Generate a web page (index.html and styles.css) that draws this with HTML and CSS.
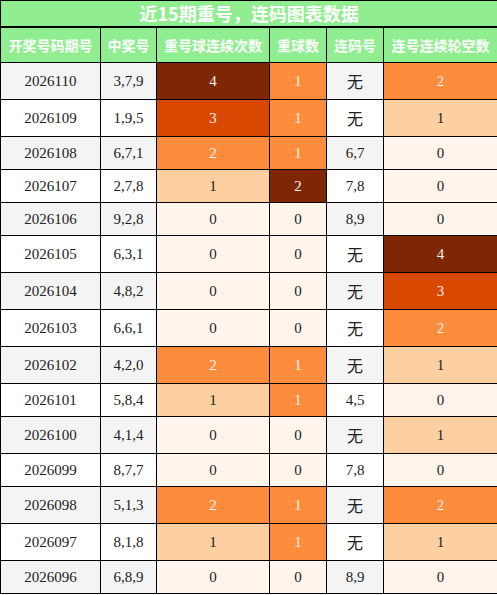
FILE: index.html
```html
<!DOCTYPE html>
<html lang="zh">
<head>
    <meta charset="UTF-8">
    <meta name="viewport" content="width=device-width, initial-scale=1.0">
    <title>近15期重号，连码图表数据</title>
    <link rel="stylesheet" href="styles.css">
</head>
<body>
    <table class="data">
        <colgroup>
            <col class="c-qi">
            <col class="c-hao">
            <col class="c-lx">
            <col class="c-cq">
            <col class="c-lm">
            <col class="c-lk">
        </colgroup>
        <thead>
            <tr><th class="title" colspan="6">近15期重号，连码图表数据</th></tr>
            <tr>
                <th>开奖号码期号</th>
                <th>中奖号</th>
                <th>重号球连续次数</th>
                <th>重球数</th>
                <th>连码号</th>
                <th>连号连续轮空数</th>
            </tr>
        </thead>
        <tbody>
            <tr><td>2026110</td><td>3,7,9</td><td class="g4">4</td><td class="g2">1</td><td class="wu">无</td><td class="g2">2</td></tr>
            <tr><td>2026109</td><td>1,9,5</td><td class="g3">3</td><td class="g2">1</td><td class="wu">无</td><td class="g1">1</td></tr>
            <tr><td>2026108</td><td>6,7,1</td><td class="g2">2</td><td class="g2">1</td><td>6,7</td><td class="g0">0</td></tr>
            <tr><td>2026107</td><td>2,7,8</td><td class="g1">1</td><td class="g4">2</td><td>7,8</td><td class="g0">0</td></tr>
            <tr><td>2026106</td><td>9,2,8</td><td class="g0">0</td><td class="g0">0</td><td>8,9</td><td class="g0">0</td></tr>
            <tr><td>2026105</td><td>6,3,1</td><td class="g0">0</td><td class="g0">0</td><td class="wu">无</td><td class="g4">4</td></tr>
            <tr><td>2026104</td><td>4,8,2</td><td class="g0">0</td><td class="g0">0</td><td class="wu">无</td><td class="g3">3</td></tr>
            <tr><td>2026103</td><td>6,6,1</td><td class="g0">0</td><td class="g0">0</td><td class="wu">无</td><td class="g2">2</td></tr>
            <tr><td>2026102</td><td>4,2,0</td><td class="g2">2</td><td class="g2">1</td><td class="wu">无</td><td class="g1">1</td></tr>
            <tr><td>2026101</td><td>5,8,4</td><td class="g1">1</td><td class="g2">1</td><td>4,5</td><td class="g0">0</td></tr>
            <tr><td>2026100</td><td>4,1,4</td><td class="g0">0</td><td class="g0">0</td><td class="wu">无</td><td class="g1">1</td></tr>
            <tr><td>2026099</td><td>8,7,7</td><td class="g0">0</td><td class="g0">0</td><td>7,8</td><td class="g0">0</td></tr>
            <tr><td>2026098</td><td>5,1,3</td><td class="g2">2</td><td class="g2">1</td><td class="wu">无</td><td class="g2">2</td></tr>
            <tr><td>2026097</td><td>8,1,8</td><td class="g1">1</td><td class="g2">1</td><td class="wu">无</td><td class="g1">1</td></tr>
            <tr><td>2026096</td><td>6,8,9</td><td class="g0">0</td><td class="g0">0</td><td>8,9</td><td class="g0">0</td></tr>
        </tbody>
    </table>
</body>
</html>
```

FILE: styles.css
```css
body{
    margin: 0;
    font-family: 'Liberation Serif', 'Noto Sans CJK SC', serif;
    background: #fff;
}
.data{
    width: 497px;
    border-collapse: collapse;
    table-layout: fixed;
}
.c-qi{ width: 100px; }
.c-hao{ width: 56px; }
.c-lx{ width: 113px; }
.c-cq{ width: 57px; }
.c-lm{ width: 57px; }
.c-lk{ width: 114px; }
th, td{
    border: 1px solid #000;
    text-align: center;
}
th{
    background-color: #90ee90;
    color: #fff;
    font-family: 'Noto Sans CJK SC', sans-serif;
    font-size: 14px;
    font-weight: bold;
    padding: 7px 0;
    line-height: 20px;
    white-space: nowrap;
}
th.title{
    font-size: 18px;
    padding: 0;
    line-height: 25px;
    border-bottom-width: 2px;
}
td{
    font-size: 15px;
    line-height: 16px;
    color: #222;
    padding: 8px 0;
    background-color: #fff;
}
tbody tr:nth-child(odd) td{
    background-color: #f4f4f4;
}
td.wu{
    font-family: 'Noto Sans CJK SC', sans-serif;
    font-size: 16px;
    line-height: 20px;
}
tbody tr td.g0{ background-color: #fff5eb; color: #222; }
tbody tr td.g1{ background-color: #fdd0a2; color: #222; }
tbody tr td.g2{ background-color: #fd8d3c; color: #f1f1f1; }
tbody tr td.g3{ background-color: #d94801; color: #f1f1f1; }
tbody tr td.g4{ background-color: #7f2704; color: #f1f1f1; }
```
